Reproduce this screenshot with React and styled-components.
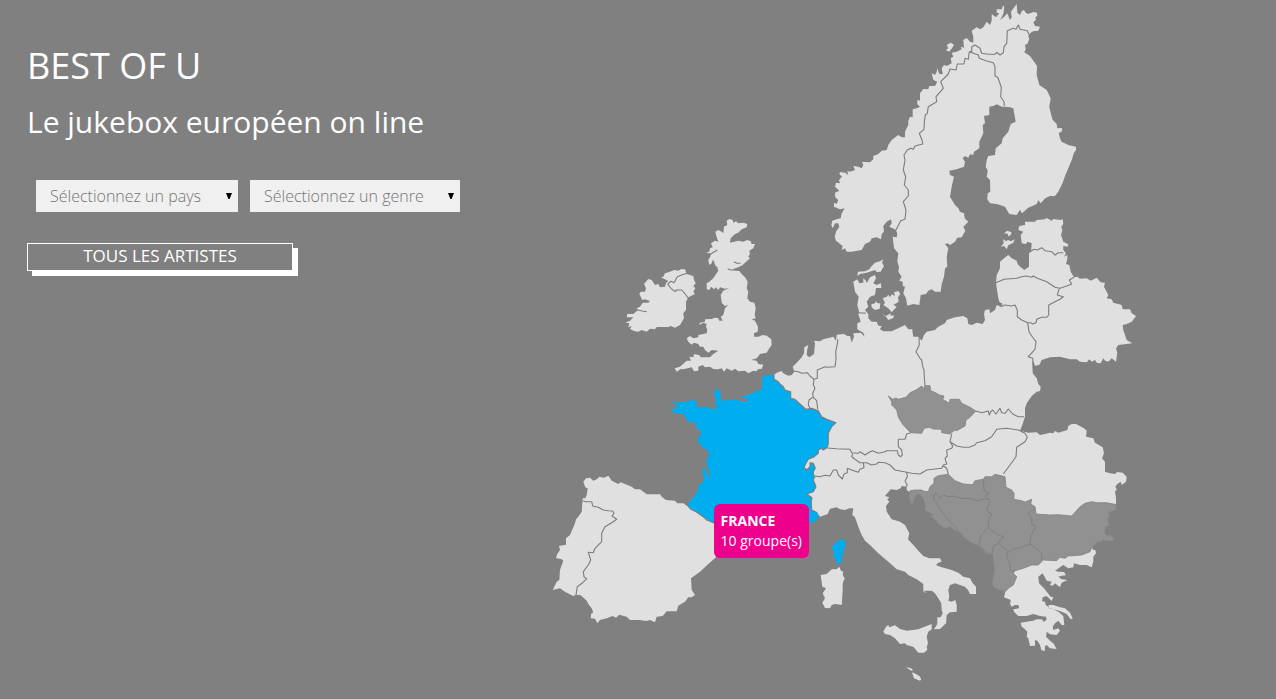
import React from "react";
import styled, { createGlobalStyle } from "styled-components";

const GlobalStyle = createGlobalStyle`
  * { box-sizing: border-box; }
  body {
    margin: 0;
    background: #808080;
    color: #fff;
    font-family: "Open Sans", "Noto Sans", sans-serif;
  }
`;

const Page = styled.div`
  display: grid;
  grid-template-columns: 536fr 740fr;
  align-items: start;
`;

const Intro = styled.header`
  padding: 42px 24px 0 27px;
`;

const Title = styled.h1`
  margin: 0;
  font-size: 36px;
  line-height: 48px;
  font-weight: 400;
`;

const Subtitle = styled.h2`
  margin: 12px 0 0;
  font-size: 30px;
  line-height: 40px;
  font-weight: 400;
`;

const Filters = styled.form`
  display: flex;
  gap: 12px;
  margin: 38px 0 0 9px;
`;

const SelectBox = styled.label`
  position: relative;
  display: block;
  width: ${(p) => p.$width}px;
`;

const Select = styled.select`
  appearance: none;
  display: block;
  width: 100%;
  height: 32px;
  padding: 0 24px 0 14px;
  border: 0;
  border-radius: 0;
  background: #f0f0f0;
  color: #747474;
  font-family: inherit;
  font-size: 16px;
  font-weight: 300;
`;

const Arrow = styled.svg`
  position: absolute;
  right: 6px;
  top: 13px;
  pointer-events: none;
`;

const AllArtists = styled.button`
  display: block;
  width: 266px;
  height: 28px;
  margin-top: 31px;
  padding: 0 0 2px;
  border: 1px solid #fff;
  background: #808080;
  box-shadow: 5px 5px 0 #fff;
  color: #fff;
  font-family: inherit;
  font-size: 17px;
  line-height: 24px;
`;

const MapArea = styled.main`
  position: relative;
`;

const MapSvg = styled.svg`
  display: block;
  width: 100%;
  height: auto;
`;

const Tooltip = styled.div`
  position: absolute;
  left: 24%;
  top: 72.1%;
  padding: 7px;
  border-radius: 6px;
  background: #ec008c;
  font-size: 14px;
  line-height: 20px;
  white-space: nowrap;
`;

const TooltipName = styled.strong`
  display: block;
`;

/* Origin of each survey sheet on the map; sheet units are a third of a map unit. */
const SHEETS = {
  isles: [610, 200],
  north: [820, 0],
  sound: [820, 160],
  baltic: [980, 200],
  centre: [770, 310],
  west: [540, 360],
  italy: [790, 430],
  balkans: [880, 410],
};

const place = (sheet, points) =>
  points.split(" ").map((pair) => {
    const [x, y] = pair.split(",").map(Number);
    const [ox, oy] = SHEETS[sheet];
    return `${(ox + x / 3).toFixed(1)} ${(oy + y / 3).toFixed(1)}`;
  });

const line = (...parts) => "M" + parts.flatMap(([sheet, points]) => place(sheet, points)).join("L");
const area = (...parts) => line(...parts) + "Z";

const adriaticCoast = "355,538 340,530 337,515 342,490 342,470 340,440 332,430 320,430 310,416 295,405 280,402 250,380 240,370 225,360 210,350 198,355 190,352 175,342 165,328 150,317 160,314 150,308 135,301 136,285 132,270 122,255 112,250 104,262 97,282 92,278 88,262 90,245";
const blackSeaCoast = "708,300 698,303 686,305 688,318 683,330 688,345 676,352 674,370 682,378 688,374 700,384 700,392 675,392 670,387 664,395 648,397 640,408 635,412";

const LAND = {
  scandinavia: area(
    ["north", "590,12 592,38 600,45 606,32 612,30 617,38 625,42 640,36 651,38 652,48 646,52 648,60 640,66 645,78 660,80 655,92 640,94 632,98 625,108 628,118 622,132 615,135 617,148 613,157 630,168 640,182 651,198 650,225 658,255 680,270 692,295 688,320 692,340 698,360 710,372 712,385 726,384 726,394 716,400 720,415 725,425 745,435 768,440 768,450 762,458 755,480 745,505 735,528"],
    ["sound", "728,68 715,95 705,108 690,108 676,115 662,130 655,121 650,132 625,143 606,160 600,149 590,165 568,162 555,140 530,132 510,130 502,118 503,100 511,95 510,60 500,50 503,32 497,20 500,0"],
    ["north", "505,468 525,465 527,445 545,430 548,415 565,395 572,372 587,365 580,325 570,322 555,320 545,320 530,313 520,318 508,320 508,345 492,348 495,370 488,375 490,400 478,425 478,445 462,455 460,465 450,463 445,473 435,468 428,475 435,485 432,500 410,508 388,512 390,525 402,530"],
    ["sound", "396,75 390,110 405,135 415,145 420,155 432,160 434,175 445,185 430,200 436,212 425,232 412,233 405,245 390,255 382,250 375,252 385,265 380,290 382,320 375,325 372,350 365,372 362,395 345,395 335,388 325,392 318,402 302,405 298,435 280,432 262,437 258,415 250,400 255,380 248,378 248,365 238,362 245,350 235,335 237,320 232,305 235,280 222,265 218,230 230,232 232,222 228,210 218,205 208,200 215,190 213,178 200,185 190,198 192,215 185,222 183,238 170,232 155,235 150,245 135,252 125,270 95,275 80,275 75,265 65,270 68,258 48,242 44,230 48,215 58,200 55,190 45,190 38,205 34,195 37,182 50,178 62,175 65,160 74,145 60,148 42,140 42,128 50,132 55,120 46,112 45,98 58,92 45,80 48,68 60,70 57,60 66,50 58,42 60,36 75,38 85,45 82,33 90,35 105,30 100,18 115,20 125,25 130,15 126,5"],
    ["north", "135,486 150,487 160,478 160,468 175,462 185,452 200,450 205,435 215,420 235,405 245,412 255,412 255,395 265,375 265,362 270,350 278,352 278,328 290,325 300,320 292,313 292,300 300,302 300,280 310,267 325,268 328,258 345,258 352,245 340,240 335,220 345,225 350,215 352,205 358,222 368,222 365,205 372,195 380,198 395,190 392,175 400,170 395,158 410,155 425,148 422,140 432,143 430,120 440,114 450,125 460,128 460,110 455,92 470,82 480,88 490,82 500,65 510,75 515,62 515,42 528,52 538,40 530,38 530,28 545,28 550,16 553,22 550,42 540,60 555,48 562,40 570,60 575,52 573,35"]
  ),
  lofoten: area(["north", "377,150 385,145 380,135 392,128 402,134 398,142 388,155"]),
  jutlandNorth: area(["sound", "112,348 114,335 135,334 148,328 155,318 165,308 180,304 190,298 186,308 192,318 182,335 170,336 165,330 140,338 120,342"]),
  funen: area(["sound", "154,433 165,430 168,423 172,430 181,430 179,446 165,450 155,442"]),
  zealand: area(["sound", "188,415 200,410 205,404 210,412 215,403 225,408 222,397 235,393 241,402 234,412 236,425 220,435 230,440 215,457 205,445 190,435 195,428"]),
  lolland: area(["sound", "186,462 198,468 212,460 212,468 222,465 220,474 205,480 198,470"]),
  hiiumaa: area(["sound", "552,220 562,212 574,217 574,222 566,230 563,221"]),
  saaremaa: area(["sound", "542,260 551,250 549,238 558,243 565,240 572,244 584,238 580,248 565,256 560,268 552,258"]),
  britain: area(["isles", "358,57 368,60 370,68 378,64 385,70 400,68 412,72 410,82 395,88 385,98 375,102 362,115 360,128 370,126 385,122 400,125 412,120 422,124 425,132 435,132 430,145 418,152 420,162 415,170 420,175 405,188 398,195 385,202 368,208 375,212 388,213 395,222 405,232 413,245 410,265 415,275 412,295 420,305 433,308 437,325 434,345 437,355 425,358 435,362 444,380 443,395 432,400 432,410 445,410 458,405 470,407 484,418 485,435 478,445 470,458 450,462 440,475 424,480 440,482 445,492 460,494 455,506 445,508 438,514 430,512 415,520 405,512 385,514 375,506 365,512 350,505 342,515 335,505 325,508 310,507 300,500 285,502 278,495 265,500 265,512 252,514 245,502 220,508 212,507 200,515 194,505 210,500 230,482 243,482 238,470 250,472 252,462 268,466 272,472 300,472 310,462 325,452 305,450 295,458 285,450 280,440 270,440 265,432 252,428 245,434 235,425 230,415 240,408 250,415 265,412 265,405 290,400 292,390 288,380 290,372 280,368 268,375 270,368 285,365 285,358 305,357 315,353 325,355 328,362 338,362 332,350 340,345 345,325 355,315 345,318 335,308 332,285 340,272 358,264 345,266 330,262 325,270 318,262 312,268 303,260 298,270 290,268 290,250 298,245 310,235 325,212 322,203 325,205 315,195 312,183 308,180 305,190 298,195 295,180 302,168 300,160 288,158 298,155 300,145 308,142 303,130 315,122 325,125 318,105 316,95 325,90 335,95 340,100 342,80 352,75 350,62"]),
  ireland: area(["isles", "193,210 205,212 212,208 225,208 230,222 240,225 250,228 252,240 257,250 250,258 256,265 250,275 255,282 235,292 228,305 228,330 220,340 222,355 210,375 195,383 182,378 175,381 140,381 135,388 120,386 110,395 95,390 85,395 72,393 60,387 65,378 55,382 58,370 46,368 60,362 70,352 50,352 52,342 70,342 78,335 85,330 80,325 90,320 98,308 115,308 120,303 105,298 97,300 88,282 92,275 105,275 108,265 102,252 115,237 125,240 135,255 145,252 150,262 165,260 168,248 175,243 153,232 160,230 165,220 180,215"]),
  iberia: area(["west", "130,365 138,355 150,353 160,362 172,357 178,350 192,353 205,347 215,362 235,372 242,367 275,380 285,388 300,388 320,403 360,403 365,410 378,420 405,422 412,430 430,430 445,440 470,458 490,472 520,490 580,500 580,540 522,597 505,612 480,635 453,655 455,690 465,705 455,712 445,712 435,725 415,737 410,754 380,754 368,768 350,770 345,787 330,780 318,783 300,780 270,780 260,770 238,764 228,773 218,768 200,775 180,780 172,790 165,776 152,775 153,762 160,757 155,745 145,732 140,722 122,706 108,704 100,708 75,695 60,685 38,690 50,665 58,660 60,630 70,602 65,598 48,594 52,582 60,570 57,558 78,554 78,535 90,525 105,490 108,478 115,470 125,455 127,430 128,415 136,415 140,405 143,385 136,382"]),
  mainland: area(
    ["centre", "12,195 20,188 35,183 40,190 55,197 65,195 73,185 68,170 80,158 95,142 102,130 103,112 115,105 112,118 110,135 118,142 132,132 135,100 132,92 150,94 160,88 190,80 198,92 200,74 222,72 232,78 240,78 245,98 252,80 250,70 272,68 284,80 280,68 262,58 262,40 272,35 265,12"],
    ["sound", "118,458 112,435 116,410 105,395 100,365 112,358 118,370 130,368 130,355 138,362 140,370 150,352 165,345 168,355 160,370 170,375 183,370 184,384 168,384 165,405 150,410 140,425 145,440 135,450 145,462 145,475 155,485 170,485 175,497 185,498 180,508 190,514 215,514 255,495 265,508 278,508"],
    ["centre", "427,62 430,80 445,80 455,92 462,75 470,65 495,60 505,50 525,40 530,30 555,22 580,18 592,25 595,42 605,45 620,38 638,42 645,30 642,12"],
    ["baltic", "12,342 15,330 28,328 30,340 45,330 50,315 62,320 68,312 58,305 55,295 52,275 48,248 50,225 60,205 60,185 72,175 85,165 95,175 110,182 113,193 122,202 133,210 147,200 147,160 153,155 155,130 142,125 138,132 125,130 122,105 130,95 115,90 118,78 135,75 135,65 165,65 170,60 195,58 200,54 215,62 220,57 240,60 248,58 250,72 244,80 247,92 243,105 250,125 265,133 263,140 250,138 250,150 258,160 252,170 262,165 262,178 258,192 268,195 272,215 282,232 292,230 300,236 320,235 332,242 350,233 362,247 375,248 372,260 385,285 380,295 395,298 400,308 425,315 428,328 450,328 455,340 468,348 455,365 440,372 428,375 430,390 440,420 457,430 415,435 408,445 412,458 408,485 395,475 385,485 375,482 370,475 362,490 350,488 345,480 335,485 328,478 320,487 300,485 290,478 270,478 240,470 210,472 185,480 178,495 165,497 158,480"],
    ["centre", "787,165 788,190 800,205 805,222 812,230 810,243 800,245 785,258 770,280 765,295 765,320 757,345 750,362 775,368 800,367"],
    ["balkans", "480,75 495,72 510,68 520,70 525,63 535,68 562,60 565,48 575,42 588,42 612,55 620,62 618,80 640,85 645,98 668,112 672,130 666,145 675,155 675,185 690,190 705,192 712,186 728,188 740,200 738,215 725,225 722,215 712,222 706,230 710,238 705,245 708,262 708,285"],
    ["balkans", blackSeaCoast],
    ["balkans", "640,420 646,420 648,430 640,440 640,455 635,472 620,465 600,465 582,460 580,472 565,475 550,465 540,472 525,482 535,485 552,486 558,496 545,497 535,500 545,508 562,510 545,518 540,532 525,520 518,527 510,525 515,515 500,512 488,490 475,500 477,520 492,535 500,545 512,560 520,562 515,573 500,558 488,562 486,574 495,575 497,585 505,590 508,595 520,597 535,605 550,618 553,645 545,645 535,632 525,640 518,650 520,660 535,655 540,662 530,675 510,673 500,665 498,680 510,692 520,700 530,717 510,715 500,705 495,708 494,724 484,720 480,705 472,692 465,690 465,707 450,708 445,685 440,680 442,665 432,655 425,650 422,638 440,635 460,632 470,628 485,628 492,636 500,628 498,620 480,618 460,612 440,618 415,618 402,605 400,598 418,595 415,585 405,585 395,590 390,582 392,570 372,562 375,550 370,540"],
    ["balkans", adriaticCoast],
    ["balkans", "88,245 80,240 80,230 65,228 62,235 50,240 32,238 15,258 28,262 22,268 28,275 18,288 20,305 35,328 60,335 75,345 88,370 84,388 100,405 115,422 130,438 148,445 180,445 185,455 175,458 168,465 180,470 215,480 235,488 250,500 270,505 278,520 288,530 288,552 270,552 264,540 255,530 240,525 225,520 210,525 205,540 208,560 205,572 215,575 226,570 230,585 230,605 210,607 200,615 198,640 180,657 162,658 172,642 172,622 182,622 188,610 185,600 184,580 175,565 165,550 155,542 130,542"],
    ["italy", "412,490 400,485 400,462 380,448 355,435 345,425 320,418 300,400 265,370 240,345 225,332 215,315 205,290 195,262 187,255 190,235 178,235 165,240 150,238 140,232 120,236 113,252 90,260 82,248 65,240 64,215 66,203 50,192 70,185 78,170 70,150 74,140"],
    ["centre", "130,485 136,475 130,460 120,458 120,470 110,480 102,472 108,460 115,448 130,442 145,430 145,420 155,415 160,420 172,412 175,400 175,370 185,350 198,338 170,328 155,320 145,302 125,295 108,298 90,282 75,268 62,265 62,245 45,240 40,230 30,222 25,215 12,208"]
  ),
  evia: area(["balkans", "505,585 520,585 540,592 555,595 570,608 578,625 572,628 560,612 545,605 530,600 508,594"]),
  sardinia: area(["italy", "148,410 153,422 160,425 158,435 164,445 158,460 158,480 155,525 135,522 125,525 120,535 105,534 97,518 105,505 98,490 108,475 97,470 92,435 110,432 125,418 140,418"]),
  sicily: area(["italy", "280,605 288,590 295,585 298,592 315,586 330,597 350,602 385,598 400,592 425,582 425,598 415,605 410,620 414,640 410,650 412,660 402,668 385,668 370,650 350,645 345,640 330,642 315,625 300,615 285,612"]),
  gozo: area(["italy", "348,712 362,714 370,721 364,722"]),
  malta: area(["italy", "366,727 378,732 388,738 394,748 390,752 372,745"]),
};

const FRANCE = [
  area(["west", "703,43 668,48 665,70 665,88 650,92 630,102 602,108 618,115 622,122 610,125 585,118 565,120 550,122 540,112 543,98 538,92 530,85 522,95 525,108 527,118 525,125 530,140 528,148 515,145 500,140 480,140 468,138 470,125 457,118 445,122 445,130 435,122 412,128 408,122 393,127 408,130 412,138 405,145 393,148 400,158 410,158 430,162 445,185 465,186 470,205 484,212 480,225 472,238 478,250 490,265 505,270 507,288 500,295 500,312 508,335 510,350 505,350 498,330 490,320 488,340 492,358 485,370 475,375 474,390 460,412 442,432 450,445 470,455 500,480 525,490 600,520 700,510 805,488 825,485 828,478 840,465 845,440 835,380 835,300 865,265 895,185 830,145 800,145 760,105"]),
  area(["italy", "155,328 165,330 166,350 160,358 160,368 155,382 155,392 148,402 138,400 140,390 130,380 132,370 125,352 132,342 142,332"]),
];

const INACTIVE = [
  area(["centre", "355,258 368,268 378,264 385,268 408,262 420,248 438,240 455,228 462,236 465,227 480,227 482,242 500,250 508,255 522,258 518,268 538,280 540,268 568,268 575,280 600,292 617,303 600,322 588,330 585,348 560,362 555,360 540,372 515,368 515,358 490,357 478,352 462,355 455,370 422,368 400,345 390,330 385,320 380,300 365,285 365,275"]),
  area(
    ["balkans", "90,242 105,240 125,240 132,244 145,245 150,230 162,220 162,205 175,197 205,193 225,212 250,222 278,224 285,212 310,208 315,200 335,200 345,193 375,200 378,232 395,240 402,250 402,268 425,272 435,276 455,268 452,282 465,290 468,312 510,315 535,314 575,318 600,290 615,280 635,275 650,278 680,278 710,284"],
    ["balkans", blackSeaCoast],
    ["balkans", "630,425 605,435 565,438 555,445 540,442 530,452 490,450 475,465 455,465 430,475 405,482 400,490 410,500 400,525 385,535 372,550 368,540"],
    ["balkans", adriaticCoast]
  ),
];

const BORDERS = [
  line(["sound", "228,210 242,182 255,178 258,150 250,125 265,108 265,90 253,75 257,50 250,30 255,0"], ["north", "252,465 262,450 272,445 280,448 285,438 308,432 306,420 298,400 312,388 313,365 316,345 322,340 325,320 350,305 348,290 370,265 362,245 385,222 390,207 408,210 412,192 432,192 435,175 445,178 448,155"]),
  line(["north", "448,155 455,155 455,140 465,135 480,145 485,160 505,163 525,163 530,157 540,165 550,158 552,140 560,130 562,92 580,85 588,88 595,75 600,88 622,92 628,105"]),
  line(["north", "448,155 475,165 478,175 498,182 520,188 525,200 525,228 533,232 544,262 542,290 552,305 553,318"]),
  line(["isles", "232,220 215,225 202,230 192,248 183,244 173,252 183,265 195,275 200,270 215,270 224,280 235,295"]),
  line(["isles", "83,330 97,333 110,335"]),
  line(["isles", "353,206 362,210 372,210"]),
  line(["isles", "298,165 308,158 322,150"]),
  line(["isles", "372,185 380,190 392,190"]),
  line(["west", "128,423 140,425 155,425 158,438 175,442 190,450 205,452 218,453 222,460 216,468 230,478 215,488 195,500 185,520 185,545 165,565 160,578 145,577 152,600 145,615 130,635 132,650 140,656 128,668 112,680 108,705"]),
  line(["west", "442,435 452,448 470,456 490,470 500,480 525,490"]),
  line(["centre", "203,88 203,95 197,125 198,150 195,170 172,172 165,170 142,180 142,205 132,208"]),
  line(["centre", "70,183 85,185 95,190 112,188 120,198 132,208"]),
  line(["centre", "132,208 130,225 135,235 128,250 130,262 140,272 143,298"]),
  line(["centre", "128,262 117,270 115,285 122,298"]),
  line(["centre", "12,195 12,208 25,215 30,222 40,230 45,240 62,245 62,265 75,268 90,282 108,298 125,295 145,302 155,320 170,328 198,338 185,350 175,370 175,400 172,412 160,420 155,415 145,420 145,430 130,442 115,448 108,460 102,472 110,480 120,470 120,458 130,460 136,475 130,485 130,497"]),
  line(["italy", "74,140 70,150 78,170 70,185 50,192 66,203 64,215 65,240 82,248"]),
  line(["sound", "116,458 138,460"]),
  line(["centre", "447,82 448,105 438,125 450,145 455,150 458,170 462,180 463,200 465,228"]),
  line(["centre", "172,414 200,416 240,418 245,428 265,430 270,425 285,435 300,425 308,422 325,430 345,425 350,422 382,422 385,435 392,440 397,435 395,420 385,410 385,388 405,388 410,372 422,368"]),
  line(["centre", "248,430 245,440 255,448 270,458 290,458 305,465 320,462 325,457 345,458 360,465 375,480 410,487 425,490 450,492 470,480 515,475 520,465 530,462 525,445 532,438 530,420 545,415 548,408 540,395 545,372"]),
  line(["centre", "130,497 150,500 165,496 180,498 190,480 200,480 205,495 217,507 222,492 232,488 232,475 245,480 265,487 270,478 282,473 280,458"]),
  line(["centre", "540,395 560,408 580,412 598,412 615,405 620,398 645,392 665,380 680,358 710,355 745,360 750,362"]),
  line(["centre", "617,303 635,308 655,303 658,315 662,305 668,300 678,312 690,295 695,308 705,310 715,297 728,312 745,320 762,320"]),
  line(["centre", "750,362 765,370 772,382 765,395 740,412 738,440 720,465 700,492"]),
  line(["centre", "520,468 530,475 535,492"]),
  line(["centre", "410,487 412,500 405,513 412,525 408,530"]),
  line(["baltic", "62,320 75,315 95,318 105,315 112,330 112,350 125,360 143,368 147,395 155,408 168,425 165,448 145,470 158,475 160,495"]),
  line(["baltic", "143,368 152,368 158,372 168,368 170,358 185,352 200,352 206,345 206,315 225,305 240,298 250,290 232,285 238,265"]),
  line(["baltic", "48,248 72,238 110,235 125,230 140,228 155,232 160,228 172,235 200,245 225,262 240,265 260,258 275,252 268,240 282,232"]),
  line(["baltic", "150,155 162,148 172,150 185,143 195,152 215,155 225,165 235,158 250,158"]),
];

const INACTIVE_BORDERS = [
  line(["balkans", "328,268 310,267 290,272 270,266 245,265 220,258 205,260 190,255 180,265 168,248 160,258 162,270 172,280 175,290 200,325 225,350 250,380"]),
  line(["balkans", "310,208 312,240 328,250 315,258 328,268 328,285 322,290 322,305 335,312 325,330 325,352 305,375 300,385 297,405"]),
  line(["balkans", "325,352 350,372 372,382 360,390 355,400 340,408 336,435"]),
  line(["balkans", "355,400 368,412 380,420 380,445 388,455 392,482 402,484"]),
  line(["balkans", "380,430 400,418 425,412 450,402 465,412 485,430 485,450"]),
  line(["balkans", "465,292 445,312 455,325 455,342 468,348 460,365 453,375 450,402"]),
];

function EuropeMap() {
  return (
    <MapSvg viewBox="536 0 740 699" role="img" aria-label="Europe">
      <g fill="#00aeef">
        {FRANCE.map((d) => <path key={d} d={d} />)}
      </g>
      <g fill="#e0e0e0">
        {Object.entries(LAND).map(([name, d]) => <path key={name} d={d} />)}
      </g>
      <g fill="#919191" stroke="#808080" strokeWidth="0.8">
        {INACTIVE.map((d) => <path key={d} d={d} />)}
      </g>
      <g fill="none" stroke="#7c7c7c" strokeWidth="1.1" strokeLinejoin="round">
        {BORDERS.map((d) => <path key={d} d={d} />)}
      </g>
      <g fill="none" stroke="#808080" strokeWidth="1" strokeLinejoin="round">
        {INACTIVE_BORDERS.map((d) => <path key={d} d={d} />)}
      </g>
    </MapSvg>
  );
}

function Dropdown({ label, width }) {
  return (
    <SelectBox $width={width}>
      <Select aria-label={label} defaultValue="">
        <option value="">{label}</option>
      </Select>
      <Arrow width="6" height="6" viewBox="0 0 6 6" aria-hidden="true">
        <path d="M0 0H6L3.6 6H2.4Z" fill="#000" />
      </Arrow>
    </SelectBox>
  );
}

export default function App() {
  return (
    <>
      <GlobalStyle />
      <Page>
        <Intro>
          <Title>BEST OF U</Title>
          <Subtitle>Le jukebox européen on line</Subtitle>
          <Filters>
            <Dropdown label="Sélectionnez un pays" width={202} />
            <Dropdown label="Sélectionnez un genre" width={210} />
          </Filters>
          <AllArtists type="button">TOUS LES ARTISTES</AllArtists>
        </Intro>
        <MapArea>
          <EuropeMap />
          <Tooltip role="tooltip">
            <TooltipName>FRANCE</TooltipName>
            10 groupe(s)
          </Tooltip>
        </MapArea>
      </Page>
    </>
  );
}
